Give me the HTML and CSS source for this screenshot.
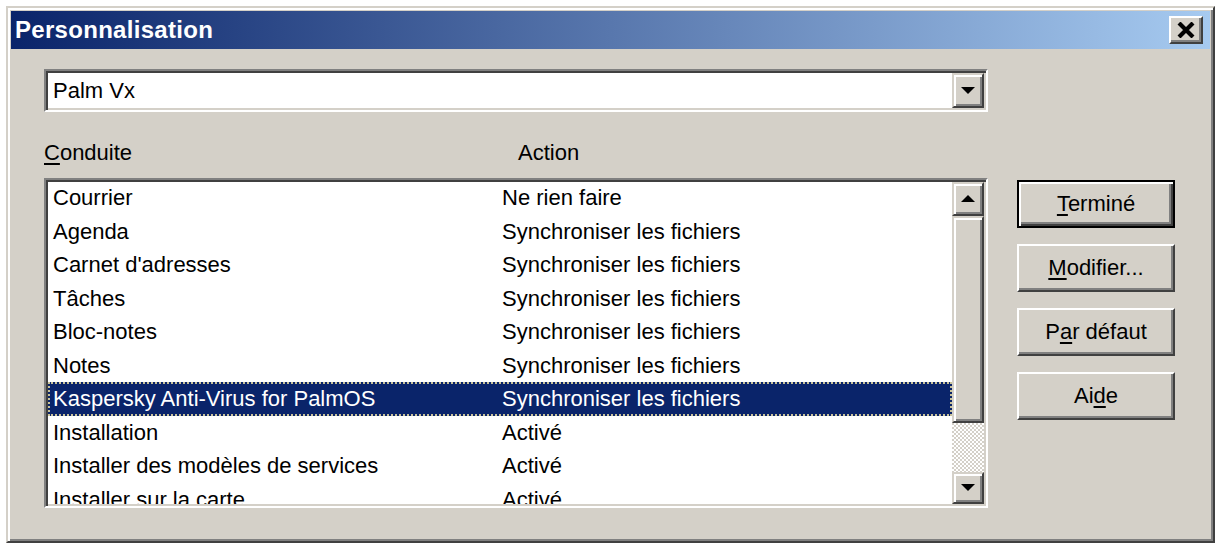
FILE: index.html
```html
<!DOCTYPE html>
<html lang="fr">
<head>
    <meta charset="UTF-8">
    <title>Personnalisation</title>
    <link rel="stylesheet" href="styles.css">
</head>
<body>

    <div class="dialog">
        <div class="titlebar">
            <span class="title">Personnalisation</span>
            <div class="close">
                <svg width="20" height="16" viewBox="0 0 20 16">
                    <path d="M3 1 L17 15 M17 1 L3 15" stroke="#000" stroke-width="4.2" fill="none"/>
                </svg>
            </div>
        </div>

        <div class="client">
            <div class="main">
                <div class="combo">
                    <div class="combo-text">Palm Vx</div>
                    <div class="arrow-btn">
                        <svg width="14" height="8" viewBox="0 0 14 8"><polygon points="0,0 14,0 7,7" fill="#000"/></svg>
                    </div>
                </div>

                <div class="labels">
                    <span><u>C</u>onduite</span>
                    <span>Action</span>
                </div>

                <div class="list">
                    <div class="rows">
                        <div class="row"><span>Courrier</span><span>Ne rien faire</span></div>
                        <div class="row"><span>Agenda</span><span>Synchroniser les fichiers</span></div>
                        <div class="row"><span>Carnet d'adresses</span><span>Synchroniser les fichiers</span></div>
                        <div class="row"><span>Tâches</span><span>Synchroniser les fichiers</span></div>
                        <div class="row"><span>Bloc-notes</span><span>Synchroniser les fichiers</span></div>
                        <div class="row"><span>Notes</span><span>Synchroniser les fichiers</span></div>
                        <div class="row selected"><span>Kaspersky Anti-Virus for PalmOS</span><span>Synchroniser les fichiers</span></div>
                        <div class="row"><span>Installation</span><span>Activé</span></div>
                        <div class="row"><span>Installer des modèles de services</span><span>Activé</span></div>
                        <div class="row"><span>Installer sur la carte</span><span>Activé</span></div>
                    </div>
                    <div class="scrollbar">
                        <div class="arrow-btn sb-up">
                            <svg width="14" height="8" viewBox="0 0 14 8"><polygon points="7,0 14,7 0,7" fill="#000"/></svg>
                        </div>
                        <div class="thumb"></div>
                        <div class="track"></div>
                        <div class="arrow-btn sb-down">
                            <svg width="14" height="8" viewBox="0 0 14 8"><polygon points="0,0 14,0 7,7" fill="#000"/></svg>
                        </div>
                    </div>
                </div>
            </div>

            <div class="buttons">
                <div class="btn default"><span><u>T</u>erminé</span></div>
                <div class="btn"><span><u>M</u>odifier...</span></div>
                <div class="btn"><span>P<u>a</u>r défaut</span></div>
                <div class="btn"><span>Ai<u>d</u>e</span></div>
            </div>
        </div>
    </div>

</body>
</html>
```

FILE: styles.css
```css
body {
    margin: 0;
    background: #fff;
    font-family: 'Liberation Sans', Arial, sans-serif;
    font-size: 22px;
    color: #000;
}

u {
    text-decoration-thickness: 2px;
    text-underline-offset: 3px;
}

.dialog {
    margin: 6px 0 0 6px;
    width: 1209px;
    height: 537px;
    box-sizing: border-box;
    padding: 3px;
    background: #d4d0c8;
    border: 2px solid;
    border-color: #d4d0c8 #404040 #404040 #d4d0c8;
    box-shadow: inset 2px 2px 0 #fff, inset -2px -2px 0 #808080;
    display: flex;
    flex-direction: column;
}

.titlebar {
    height: 38px;
    flex-shrink: 0;
    display: flex;
    align-items: center;
    justify-content: space-between;
    padding: 0 7px 0 4px;
    background: linear-gradient(to right, #0a246a, #a6caf0);
    color: white;
    font-weight: bold;
    font-size: 24px;
    letter-spacing: 0.3px;
}

.close {
    width: 34px;
    height: 28px;
    box-sizing: border-box;
    background: #d4d0c8;
    border: 2px solid;
    border-color: #fff #404040 #404040 #fff;
    box-shadow: inset -2px -2px 0 #808080;
    display: flex;
    align-items: center;
    justify-content: center;
}

.client {
    flex: 1;
    display: flex;
    gap: 29px;
    padding: 20px 0 0 33px;
}

.main {
    width: 944px;
    display: flex;
    flex-direction: column;
}

/* sunken fields */
.combo, .list {
    box-sizing: border-box;
    background: white;
    border: 2px solid;
    border-color: #808080 #fff #fff #808080;
    box-shadow: inset 2px 2px 0 #404040, inset -2px -2px 0 #d4d0c8;
    padding: 2px;
    display: flex;
}

.combo {
    height: 43px;
}

.combo-text {
    flex: 1;
    padding-left: 5px;
    line-height: 35px;
}

.arrow-btn {
    width: 32px;
    box-sizing: border-box;
    background: #d4d0c8;
    border: 2px solid;
    border-color: #d4d0c8 #404040 #404040 #d4d0c8;
    box-shadow: inset 2px 2px 0 #fff, inset -2px -2px 0 #808080;
    display: flex;
    align-items: center;
    justify-content: center;
}

.labels {
    display: grid;
    grid-template-columns: 474px 1fr;
    margin-top: 28px;
    height: 26px;
    line-height: 26px;
}

.list {
    margin-top: 12px;
    height: 330px;
    overflow: hidden;
}

.rows {
    flex: 1;
    overflow: hidden;
    margin-top: -1px;
}

.row {
    display: grid;
    grid-template-columns: 449px 1fr;
    height: 33.5px;
    line-height: 33.5px;
    padding-left: 5px;
    white-space: nowrap;
}

.row.selected {
    background: #0a246a;
    color: white;
    outline: 2px dotted #c9c39a;
    outline-offset: -2px;
}

.scrollbar {
    width: 32px;
    display: flex;
    flex-direction: column;
}

.sb-up {
    height: 34px;
    width: 32px;
}

.thumb {
    height: 207px;
    box-sizing: border-box;
    background: #d4d0c8;
    border: 2px solid;
    border-color: #d4d0c8 #404040 #404040 #d4d0c8;
    box-shadow: inset 2px 2px 0 #fff, inset -2px -2px 0 #808080;
}

.track {
    flex: 1;
    background: repeating-conic-gradient(#fff 0 25%, #d4d0c8 0 50%) 0 0 / 4px 4px;
}

.sb-down {
    height: 32px;
    width: 32px;
}

.buttons {
    margin-top: 111px;
    display: flex;
    flex-direction: column;
    gap: 16px;
}

.btn {
    width: 158px;
    height: 48px;
    box-sizing: border-box;
    border: 2px solid;
    border-color: #fff #404040 #404040 #fff;
    box-shadow: inset -2px -2px 0 #808080;
    display: flex;
    align-items: center;
    justify-content: center;
}

    .btn.default {
        border-color: #000;
        box-shadow: inset 2px 2px 0 #fff, inset -2px -2px 0 #404040, inset -4px -4px 0 #808080;
    }
```
